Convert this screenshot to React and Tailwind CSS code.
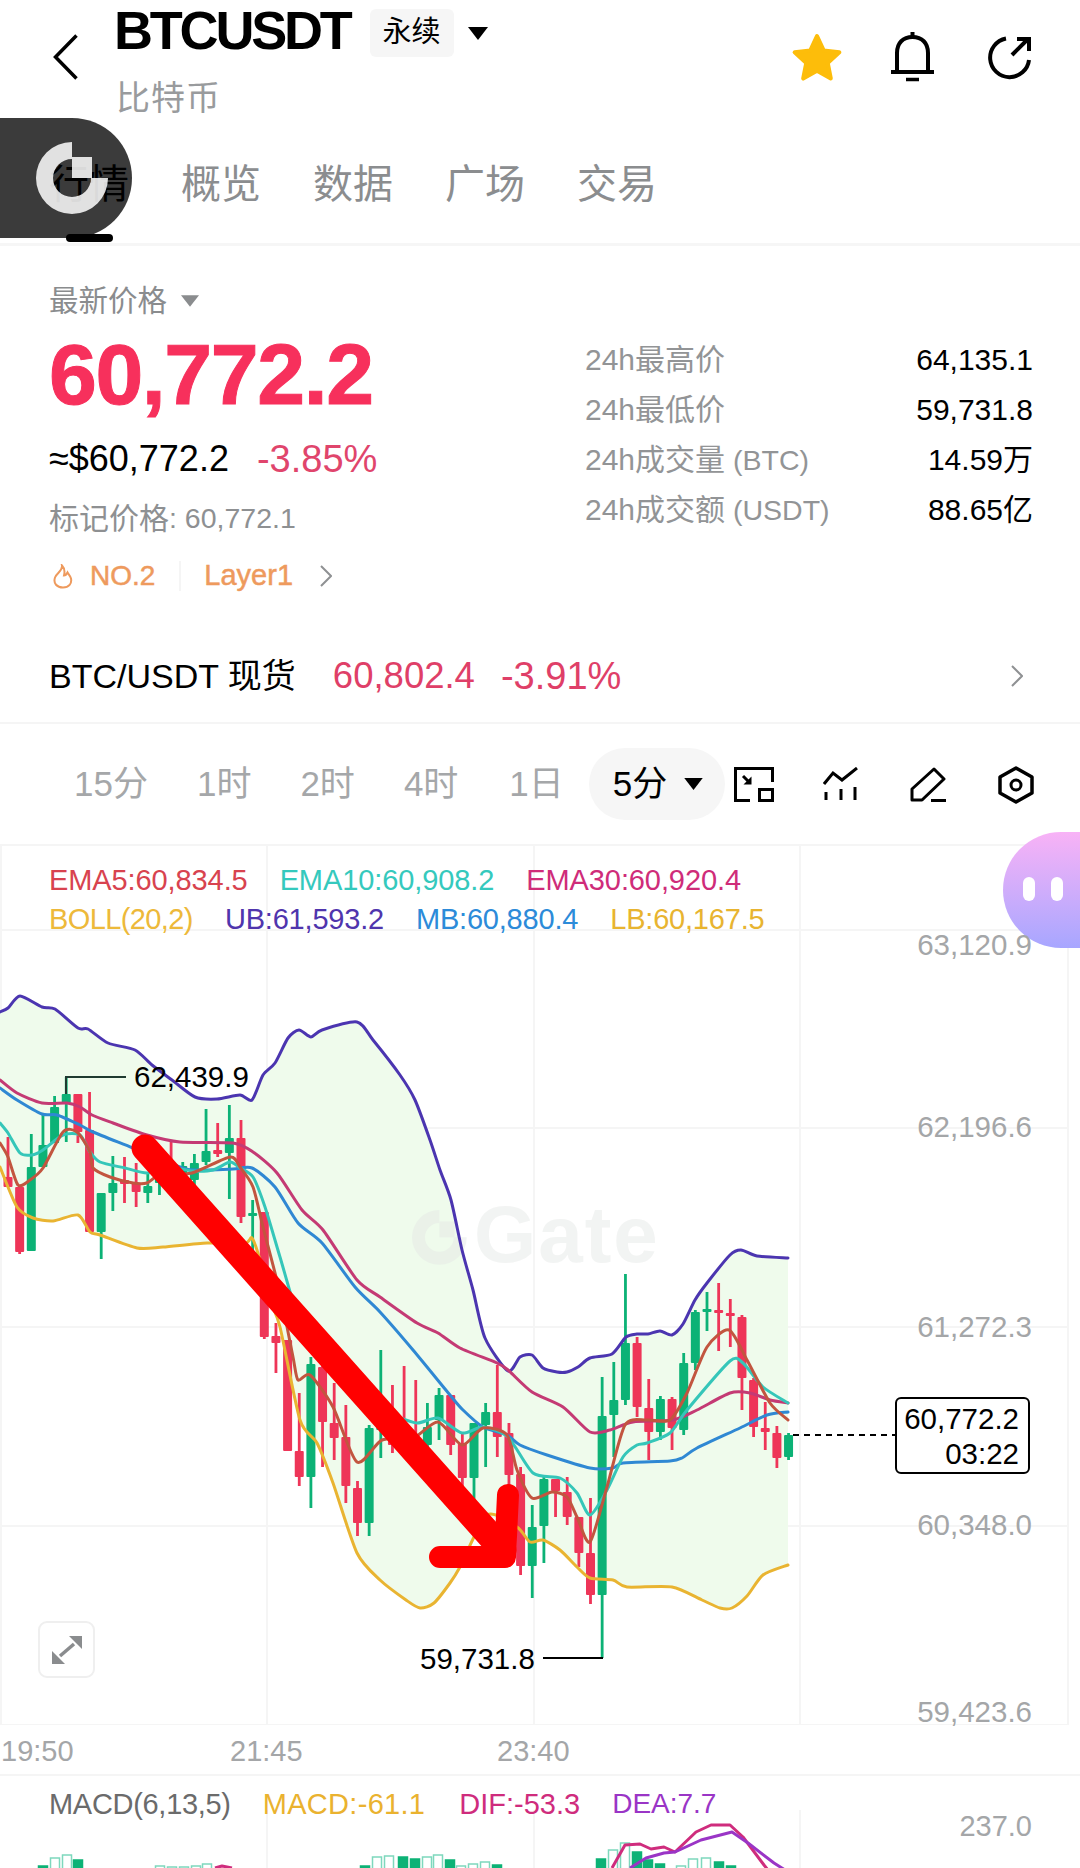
import React from "react";

const GREEN = "#0cb276";
const RED = "#ee3558";

// [wick top, body top, body bottom, wick bottom] in page pixels
const CANDLES = [
  ["r", 1137, 1177, 1187, 1187],
  ["r", 1187, 1187, 1252, 1254],
  ["g", 1134, 1167, 1251, 1251],
  ["g", 1115, 1145, 1167, 1167],
  ["g", 1096, 1107, 1143, 1143],
  ["g", 1077, 1094, 1103, 1142],
  ["r", 1094, 1094, 1132, 1143],
  ["r", 1092, 1130, 1232, 1232],
  ["g", 1193, 1193, 1232, 1259],
  ["g", 1156, 1183, 1193, 1211],
  ["r", 1157, 1180, 1184, 1203],
  ["r", 1163, 1183, 1192, 1207],
  ["g", 1173, 1186, 1193, 1203],
  ["g", 1173, 1177, 1183, 1195],
  ["r", 1140, 1165, 1172, 1190],
  ["g", 1162, 1166, 1176, 1185],
  ["g", 1154, 1163, 1180, 1187],
  ["g", 1109, 1151, 1162, 1165],
  ["r", 1123, 1150, 1154, 1157],
  ["g", 1105, 1138, 1153, 1199],
  ["r", 1120, 1138, 1217, 1223],
  ["g", 1200, 1213, 1216, 1253],
  ["r", 1212, 1212, 1337, 1339],
  ["r", 1323, 1336, 1343, 1373],
  ["r", 1340, 1340, 1451, 1451],
  ["r", 1393, 1451, 1477, 1486],
  ["g", 1357, 1364, 1477, 1508],
  ["r", 1360, 1367, 1422, 1467],
  ["r", 1383, 1423, 1438, 1460],
  ["r", 1405, 1437, 1486, 1503],
  ["r", 1481, 1488, 1523, 1536],
  ["g", 1425, 1428, 1523, 1536],
  ["g", 1350, 1400, 1430, 1458],
  ["r", 1385, 1425, 1445, 1453],
  ["r", 1366, 1428, 1440, 1452],
  ["r", 1380, 1437, 1453, 1460],
  ["g", 1403, 1427, 1445, 1457],
  ["g", 1388, 1395, 1420, 1440],
  ["r", 1395, 1395, 1445, 1455],
  ["r", 1433, 1443, 1478, 1487],
  ["g", 1423, 1423, 1478, 1502],
  ["g", 1403, 1412, 1425, 1467],
  ["r", 1365, 1412, 1437, 1457],
  ["r", 1423, 1433, 1475, 1490],
  ["r", 1467, 1474, 1566, 1575],
  ["g", 1505, 1527, 1566, 1598],
  ["g", 1477, 1479, 1526, 1563],
  ["r", 1479, 1479, 1491, 1517],
  ["r", 1477, 1492, 1517, 1525],
  ["r", 1517, 1517, 1553, 1567],
  ["r", 1498, 1553, 1595, 1604],
  ["g", 1377, 1416, 1595, 1658],
  ["g", 1362, 1400, 1415, 1457],
  ["g", 1274, 1343, 1400, 1405],
  ["r", 1337, 1343, 1407, 1417],
  ["r", 1379, 1408, 1432, 1460],
  ["g", 1396, 1399, 1432, 1440],
  ["r", 1397, 1399, 1428, 1450],
  ["g", 1353, 1363, 1430, 1435],
  ["g", 1310, 1312, 1363, 1370],
  ["g", 1292, 1309, 1311, 1331],
  ["r", 1283, 1310, 1313, 1351],
  ["r", 1299, 1313, 1315, 1347],
  ["r", 1315, 1317, 1378, 1410],
  ["r", 1378, 1380, 1427, 1437],
  ["r", 1402, 1428, 1432, 1450],
  ["r", 1426, 1433, 1458, 1468],
  ["g", 1433, 1435, 1457, 1460],
];

const UB = "0,1012 8,1008 20,996 42,1007 55,1009 78,1028 88,1029 108,1043 135,1050 152,1065 172,1080 195,1097 217,1099 240,1095 252,1100 263,1075 275,1063 288,1038 299,1030 311,1037 322,1030 357,1022 373,1040 400,1075 415,1100 430,1140 440,1170 451,1200 462,1250 473,1290 485,1338 508,1371 520,1357 532,1355 543,1368 557,1372 567,1372 578,1367 590,1358 612,1354 626,1337 637,1334 648,1334 660,1331 672,1335 683,1324 695,1300 707,1283 730,1255 741,1250 757,1256 788,1258";
const LB = "0,1167 17,1207 33,1218 53,1221 78,1215 90,1232 100,1235 137,1248 163,1247 207,1243 245,1243 252,1238 260,1260 270,1300 280,1327 300,1420 317,1443 333,1483 357,1553 380,1580 406,1600 420,1608 434,1603 450,1583 460,1567 487,1515 517,1527 530,1542 543,1540 560,1550 577,1567 590,1578 613,1580 627,1587 672,1587 702,1600 720,1608 732,1608 747,1596 763,1575 788,1565";
const EMA30 = "0,1080 17,1093 42,1103 67,1103 80,1107 92,1115 113,1123 147,1135 180,1142 233,1143 253,1152 277,1173 302,1210 323,1230 357,1280 380,1297 417,1323 438,1333 460,1348 497,1363 508,1370 532,1392 563,1407 590,1432 610,1430 633,1422 673,1420 697,1410 730,1393 750,1393 770,1400 788,1403";
const MB = "0,1088 17,1100 42,1114 57,1115 80,1125 93,1132 133,1148 180,1167 193,1170 233,1169 252,1168 275,1187 298,1223 322,1243 355,1287 380,1312 413,1350 450,1395 463,1410 483,1427 507,1435 520,1445 547,1455 590,1468 613,1468 623,1463 670,1461 682,1458 697,1448 740,1428 767,1415 788,1412";
const EMA10 = "0,1123 8,1133 20,1153 32,1155 43,1150 63,1135 80,1135 90,1152 100,1162 125,1168 147,1173 173,1168 193,1171 213,1170 230,1162 240,1168 253,1177 265,1207 280,1257 297,1313 310,1322 340,1360 373,1408 393,1415 417,1423 438,1418 462,1433 483,1427 508,1437 533,1473 560,1478 577,1493 590,1515 607,1490 623,1457 637,1445 647,1443 670,1433 687,1410 730,1361 743,1363 763,1387 788,1403";
const EMA5 = "0,1143 8,1157 18,1185 30,1180 43,1168 63,1132 77,1132 90,1152 93,1168 110,1177 133,1183 147,1183 160,1175 192,1173 230,1157 240,1167 253,1187 263,1227 280,1293 293,1357 298,1380 310,1375 333,1407 357,1462 382,1440 413,1438 438,1422 462,1445 483,1428 507,1435 517,1470 532,1498 552,1492 567,1497 577,1517 590,1542 607,1487 625,1425 647,1420 670,1420 687,1393 707,1347 729,1330 747,1360 770,1403 788,1420";

// [x, top, solid]
const MACD_BARS = [
  [43, 1866, 1], [55, 1858, 0], [67, 1855, 0], [78, 1860, 1],
  [160, 1866, 0], [172, 1867, 0], [184, 1867, 0], [196, 1866, 0], [207, 1864, 0],
  [365, 1866, 1], [377, 1857, 0], [389, 1856, 0], [403, 1857, 1], [415, 1859, 1],
  [427, 1857, 0], [438, 1855, 0], [450, 1860, 1], [461, 1866, 0], [473, 1864, 0], [485, 1862, 0], [497, 1865, 1],
  [601, 1859, 1], [613, 1850, 0], [625, 1843, 0], [637, 1852, 1], [648, 1860, 1], [660, 1864, 1],
  [681, 1866, 0], [693, 1859, 0], [706, 1858, 0], [719, 1862, 1], [731, 1866, 1],
];

// soft curve through the traced points, the app draws its lines rounded
function smooth(points) {
  const p = points.split(" ").map((s) => s.split(",").map(Number));
  let d = `M${p[0][0]} ${p[0][1]}`;
  for (let i = 0; i < p.length - 1; i++) {
    const a = p[i - 1] || p[i];
    const b = p[i];
    const c = p[i + 1];
    const e = p[i + 2] || c;
    const c1 = [b[0] + (c[0] - a[0]) / 8, b[1] + (c[1] - a[1]) / 8];
    const c2 = [c[0] - (e[0] - b[0]) / 8, c[1] - (e[1] - b[1]) / 8];
    d += `C${c1[0]} ${c1[1]} ${c2[0]} ${c2[1]} ${c[0]} ${c[1]}`;
  }
  return d;
}

function GateMark({ className, fill }) {
  return (
    <svg className={className} viewBox="0 0 72 72" fill={fill}>
      <path d="M36 0A36 36 0 1 0 72 36H55A19 19 0 1 1 36 17Z" />
      <rect x="36" y="15" width="20" height="21" />
    </svg>
  );
}

function Triangle({ className }) {
  return (
    <svg className={className} viewBox="0 0 20 13" fill="currentColor">
      <path d="M0 0H20L10 13Z" />
    </svg>
  );
}

function Chevron({ className }) {
  return (
    <svg className={className} viewBox="0 0 12 22" fill="none" stroke="#8f9193" strokeWidth="2">
      <path d="M1 1L11 11L1 21" />
    </svg>
  );
}

function Header() {
  return (
    <div className="flex h-[132px] items-start">
      <svg className="ml-[53px] mt-[34px] h-[46px] w-[25px]" viewBox="0 0 25 46" fill="none" stroke="#000" strokeWidth="3.5">
        <path d="M23.5 1.5L2.5 23L23.5 44.5" />
      </svg>
      <div className="ml-[36px] flex flex-col">
        <div className="flex h-[60px] items-center">
          <span className="text-[54px] font-bold leading-none tracking-[-3.2px] text-black">BTCUSDT</span>
          <span className="ml-[20px] mt-[6px] flex h-[48px] w-[84px] items-center justify-center rounded-[6px] bg-[#f6f6f6] text-[29px] text-black">永续</span>
          <Triangle className="ml-[14px] mt-[6px] h-[13px] w-[20px] text-black" />
        </div>
        <div className="ml-[2px] mt-[18px] flex h-[40px] items-center text-[34px] tracking-[1px] text-[#999b9d]">比特币</div>
      </div>
      <div className="ml-auto mr-[49px] mt-[32px] flex items-start">
        <svg className="h-[51px] w-[52px]" viewBox="0 0 50 50" fill="#fdbd0a" stroke="#fdbd0a" strokeWidth="4" strokeLinejoin="round">
          <polygon points="25,4 31.5,18.1 46.9,19.9 35.5,30.4 38.5,45.6 25,38 11.5,45.6 14.5,30.4 3.1,19.9 18.5,18.1" />
        </svg>
        <svg className="ml-[48px] h-[50px] w-[43px]" viewBox="0 0 43 50" fill="none" stroke="#000" strokeWidth="4">
          <path d="M6 40V21C6 11 12 5 21.5 5S37 11 37 21V40" />
          <path d="M0 40H43" />
          <path d="M21.5 0V5" />
          <path d="M15 47.5H28" strokeWidth="3.5" />
        </svg>
        <svg className="ml-[52px] mt-[4px] h-[44px] w-[45px]" viewBox="0 0 45 44" fill="none" stroke="#000" strokeWidth="4">
          <path d="M20 2.5A19.5 19.5 0 1 0 43 24" />
          <path d="M26 19L42 3" />
          <path d="M31 3H43V15" />
        </svg>
      </div>
    </div>
  );
}

function Tabs() {
  return (
    <div className="relative flex h-[114px] items-start gap-[52px] border-b-[3px] border-[#f6f6f6] pl-[49px] pt-[28px] text-[40px] leading-[48px] text-[#8b8d8f]">
      <span className="text-black">行情</span>
      <span>概览</span>
      <span>数据</span>
      <span>广场</span>
      <span>交易</span>
      <div className="absolute bottom-[1px] left-[66px] h-[8px] w-[47px] rounded-full bg-black" />
    </div>
  );
}

function PriceInfo() {
  const rows = [
    ["24h最高价", "", "64,135.1"],
    ["24h最低价", "", "59,731.8"],
    ["24h成交量", " (BTC)", "14.59万"],
    ["24h成交额", " (USDT)", "88.65亿"],
  ];
  return (
    <div className="flex h-[382px]">
      <div className="ml-[49px] flex w-[500px] flex-col">
        <div className="mt-[35px] flex h-[40px] items-center text-[29.5px] text-[#8a8c8e]">
          最新价格
          <Triangle className="ml-[14px] h-[12px] w-[18px] text-[#8a8c8e]" />
        </div>
        <div className="mt-[5px] h-[96px] text-[86px] font-bold leading-[96px] tracking-[-1.4px] text-[#f7305c] [-webkit-text-stroke:1px_#f7305c]">60,772.2</div>
        <div className="mt-[15px] flex h-[44px] items-center text-[36px]">
          <span className="text-black">≈$60,772.2</span>
          <span className="ml-[28px] text-[38px] text-[#e0456c]">-3.85%</span>
        </div>
        <div className="mt-[17px] flex h-[40px] items-center text-[30px] text-[#8e9092]">
          标记价格<span className="text-[28.5px]">: 60,772.1</span>
        </div>
        <div className="mt-[18px] flex h-[40px] items-center text-[28px] text-[#ee9a5d] [-webkit-text-stroke:0.5px_#ee9a5d]">
          <svg className="ml-[4px] h-[25px] w-[20px]" viewBox="0 0 20 25" fill="none" stroke="#ee9a5d" strokeWidth="2">
            <path d="M9 1.5C10 6.5 4 8.5 2 13.5C0 19.5 4 23.5 10 23.5C16 23.5 19 19.5 18 14.5C17.5 12 15.5 10.5 14.5 8.5C13.5 10.5 12.5 11.5 11 11.5C12 7.5 11 3.5 9 1.5Z" />
          </svg>
          <span className="ml-[17px]">NO.2</span>
          <span className="ml-[24px] h-[30px] w-[2px] bg-[#f5f5f5]" />
          <span className="ml-[23px] text-[29px]">Layer1</span>
          <Chevron className="ml-[27px] h-[22px] w-[12px]" />
        </div>
      </div>
      <div className="ml-[36px] mt-[88px] flex w-[448px] flex-col self-start text-[30px]">
        {rows.map(([label, unit, value]) => (
          <div key={label} className="flex h-[50px] items-center justify-between">
            <span className="whitespace-pre text-[#929496]">
              {label}
              <span className="text-[28.5px]">{unit}</span>
            </span>
            <span className="text-black">{value}</span>
          </div>
        ))}
      </div>
    </div>
  );
}

function SpotRow() {
  return (
    <div className="flex h-[96px] items-center border-b-2 border-[#f5f5f5] pl-[49px] pr-[57px] pt-[2px]">
      <span className="text-[34px] text-black">BTC/USDT 现货</span>
      <span className="ml-[37px] text-[36.5px] text-[#df3f68]">60,802.4</span>
      <span className="ml-[26px] text-[38px] text-[#df3f68]">-3.91%</span>
      <Chevron className="ml-auto h-[22px] w-[12px]" />
    </div>
  );
}

function Toolbar() {
  return (
    <div className="flex h-[122px] items-center border-b-2 border-[#f5f5f5] pl-[74px] text-[35px] text-[#a5a7a9]">
      <div className="flex gap-[49px]">
        <span>15分</span>
        <span>1时</span>
        <span>2时</span>
        <span>4时</span>
        <span className="ml-[2px]">1日</span>
      </div>
      <div className="ml-[25px] flex h-[72px] w-[136px] items-center rounded-full bg-[#f6f6f6] pl-[24px] text-black">
        5分
        <Triangle className="ml-[17px] h-[12px] w-[19px] text-black" />
      </div>
      <svg className="ml-[9px] mt-[1px] h-[35px] w-[40px]" viewBox="0 0 40 35" fill="none" stroke="#000" strokeWidth="3">
        <path d="M16 33.5H1.5V1.5H38.5V15" />
        <rect x="25.5" y="22.5" width="13" height="11" />
        <path d="M9 9L16 16" />
        <path d="M9.5 17.5H17.5V9.5" fill="#000" stroke="none" />
      </svg>
      <svg className="ml-[49px] mt-[1px] h-[35px] w-[36px]" viewBox="0 0 36 35" fill="none" stroke="#000" strokeWidth="3">
        <path d="M1 17L10 6L19 13L34 1" />
        <path d="M3 25V33M18 22V33M32 20V33" />
      </svg>
      <svg className="ml-[51px] mt-[1px] h-[36px] w-[36px]" viewBox="0 0 36 36" fill="none" stroke="#000" strokeWidth="3" strokeLinejoin="round">
        <path d="M2 33V22L24 2L34 12L12 33Z" />
        <path d="M21 33.5H36" />
      </svg>
      <svg className="ml-[52px] mt-[1px] h-[38px] w-[36px]" viewBox="0 0 36 38" fill="none" stroke="#000" strokeWidth="3.5" strokeLinejoin="round">
        <path d="M18 2L34 11V27L18 36L2 27V11Z" />
        <circle cx="18" cy="19" r="5" strokeWidth="3" />
      </svg>
    </div>
  );
}

function MainChart() {
  const bandFill = `${UB} ${LB.split(" ").reverse().join(" ")}`;
  return (
    <svg className="absolute inset-0 h-full w-full" viewBox="0 846 1080 879" fill="none">
      {[930, 1128, 1327, 1526, 1725].map((y) => (
        <path key={y} d={`M0 ${y}H1068`} stroke="#f5f5f5" strokeWidth="2" />
      ))}
      {[1, 267, 534, 800, 1068].map((x) => (
        <path key={x} d={`M${x} 846V1725`} stroke="#f5f5f5" strokeWidth="2" />
      ))}
      <polygon points={bandFill} fill="#effbec" />
      <g fill="#e4e7e5" opacity="0.45">
        <g transform="translate(412 1210) scale(0.76)">
          <path d="M36 0A36 36 0 1 0 72 36H55A19 19 0 1 1 36 17Z" />
          <rect x="36" y="15" width="20" height="21" />
        </g>
        <text x="474" y="1262" fontSize="80" fontWeight="700" letterSpacing="2">Gate</text>
      </g>
      {CANDLES.map(([type, wickTop, bodyTop, bodyBottom, wickBottom], i) => {
        const x = 8 + i * 11.65;
        const color = type === "g" ? GREEN : RED;
        return (
          <g key={i} fill={color}>
            <rect x={x - 1.4} y={wickTop} width="2.8" height={wickBottom - wickTop} />
            <rect x={x - 4.5} y={bodyTop} width="9" height={Math.max(bodyBottom - bodyTop, 3)} rx="1" />
          </g>
        );
      })}
      <g strokeWidth="3" strokeLinejoin="round" strokeLinecap="round">
        <path d={smooth(LB)} stroke="#e9b431" />
        <path d={smooth(UB)} stroke="#4b35b0" />
        <path d={smooth(EMA30)} stroke="#c43a74" />
        <path d={smooth(MB)} stroke="#2f88d3" />
        <path d={smooth(EMA10)} stroke="#35c6b9" />
        <path d={smooth(EMA5)} stroke="#c2553f" />
      </g>
      <path d="M66 1094V1077H126" stroke="#1f3a30" strokeWidth="2" />
      <path d="M543 1658H603" stroke="#000" strokeWidth="2" />
      <path d="M793 1435H895" stroke="#000" strokeWidth="2" strokeDasharray="6 5" />
      <g stroke="#ff0000" strokeLinecap="round" strokeLinejoin="round">
        <path d="M145 1148L503 1550" strokeWidth="27" />
        <path d="M440 1557H505L508 1495" strokeWidth="22" />
      </g>
    </svg>
  );
}

function Legend() {
  return (
    <div className="relative flex flex-col gap-[9px] pl-[49px] pt-[19px] text-[29px] leading-[30px]">
      <div className="flex gap-[32px] tracking-[-0.1px]">
        <span className="text-[#d8434f]">EMA5:60,834.5</span>
        <span className="text-[#35c9bd]">EMA10:60,908.2</span>
        <span className="text-[#cf2c79]">EMA30:60,920.4</span>
      </div>
      <div className="flex gap-[32px] tracking-[-0.2px]">
        <span className="tracking-[-0.6px] text-[#edb93a]">BOLL(20,2)</span>
        <span className="text-[#4f35ad]">UB:61,593.2</span>
        <span className="text-[#2c8bd9]">MB:60,880.4</span>
        <span className="text-[#e8b430]">LB:60,167.5</span>
      </div>
    </div>
  );
}

function Chart() {
  return (
    <div className="relative h-[879px]">
      <MainChart />
      <Legend />
      <div className="absolute right-0 top-[-14px] flex h-[116px] w-[77px] gap-[16px] rounded-l-[58px] bg-gradient-to-b from-[#f8b2f6] to-[#a7a6ff] pl-[20px] pt-[45px]">
        <span className="h-[24px] w-[12px] rounded-full bg-white" />
        <span className="h-[24px] w-[12px] rounded-full bg-white" />
      </div>
      <span className="absolute right-[48px] top-[99px] -translate-y-1/2 text-[29.5px] text-[#a4a6a8]">63,120.9</span>
      <span className="absolute right-[48px] top-[281px] -translate-y-1/2 text-[29.5px] text-[#a4a6a8]">62,196.6</span>
      <span className="absolute right-[48px] top-[481px] -translate-y-1/2 text-[29.5px] text-[#a4a6a8]">61,272.3</span>
      <span className="absolute right-[48px] top-[679px] -translate-y-1/2 text-[29.5px] text-[#a4a6a8]">60,348.0</span>
      <span className="absolute right-[48px] top-[866px] -translate-y-1/2 text-[29.5px] text-[#a4a6a8]">59,423.6</span>
      <span className="absolute left-[134px] top-[231px] -translate-y-1/2 text-[29.5px] text-black">62,439.9</span>
      <span className="absolute left-[420px] top-[813px] -translate-y-1/2 text-[29.5px] text-black">59,731.8</span>
      <div className="absolute left-[895px] top-[551px] flex h-[77px] w-[135px] flex-col items-end justify-center rounded-[6px] border-2 border-black bg-white pr-[9px] text-[29.5px] leading-[35px] text-black">
        <span>60,772.2</span>
        <span>03:22</span>
      </div>
      <div className="absolute left-[38px] top-[775px] flex h-[57px] w-[57px] items-center justify-center rounded-[9px] border-2 border-[#efefef] bg-white">
        <svg className="h-[28px] w-[30px]" viewBox="0 0 30 28" fill="#8a8c8e">
          <path d="M30 0V13L17 0Z" />
          <path d="M0 28V15L13 28Z" />
          <path d="M22 8L8 20" stroke="#8a8c8e" strokeWidth="3.5" />
        </svg>
      </div>
    </div>
  );
}

function TimeAxis() {
  return (
    <div className="relative h-[51px] border-b-2 border-[#f5f5f5] text-[29px] text-[#a4a6a8]">
      <span className="absolute left-[1px] top-[5px]">19:50</span>
      <span className="absolute left-[230px] top-[5px]">21:45</span>
      <span className="absolute left-[497px] top-[5px]">23:40</span>
    </div>
  );
}

function Macd() {
  return (
    <div className="relative flex-1 overflow-hidden">
      <svg className="absolute inset-0 h-[92px] w-[1080px]" viewBox="0 1776 1080 92" fill="none">
        {[267, 534, 800].map((x) => (
          <path key={x} d={`M${x} 1810V1868`} stroke="#f5f5f5" strokeWidth="2" />
        ))}
        {MACD_BARS.map(([x, top, solid]) => (
          <rect
            key={x}
            x={x - 4.5}
            y={top}
            width="9"
            height={1880 - top}
            fill={solid ? GREEN : "#fff"}
            stroke={solid ? GREEN : "#7ed8bd"}
            strokeWidth="1.5"
          />
        ))}
        <g strokeWidth="3" strokeLinejoin="round">
          <polyline points="215,1868 222,1866 232,1868" stroke="#cf2c7d" />
          <polyline points="612,1868 625,1845 640,1844 651,1849 664,1847 675,1852 696,1832 711,1825 730,1825 743,1837 764,1865 768,1870" stroke="#cf2c7d" />
          <polyline points="630,1868 646,1858 664,1853 675,1852 701,1840 732,1832 748,1843 774,1863 785,1870" stroke="#9a35c6" />
        </g>
      </svg>
      <div className="relative flex pl-[49px] pt-[11px] text-[29px] leading-[34px]">
        <span className="tracking-[-0.3px] text-[#6b6b6b]">MACD(6,13,5)</span>
        <span className="ml-[32px] tracking-[0.3px] text-[#eab22f]">MACD:-61.1</span>
        <span className="ml-[34px] text-[#cf2c7d]">DIF:-53.3</span>
        <span className="ml-[32px] text-[28px] text-[#9a35c6]">DEA:7.7</span>
      </div>
      <span className="absolute right-[48px] top-[29px] text-[29px] text-[#a4a6a8]">237.0</span>
    </div>
  );
}

export default function App() {
  return (
    <div className="relative flex h-[1868px] w-[1080px] flex-col overflow-hidden bg-white [font-family:'Liberation_Sans','Noto_Sans_CJK_SC',sans-serif]">
      <Header />
      <Tabs />
      <PriceInfo />
      <SpotRow />
      <Toolbar />
      <Chart />
      <TimeAxis />
      <Macd />

      {/* recording watermark over the tabs */}
      <div className="absolute left-0 top-[118px] h-[120px] w-[132px] rounded-r-[60px] bg-black/[0.77]">
        <GateMark className="absolute left-[36px] top-[24px] h-[72px] w-[72px] opacity-85" fill="#fff" />
      </div>
    </div>
  );
}
